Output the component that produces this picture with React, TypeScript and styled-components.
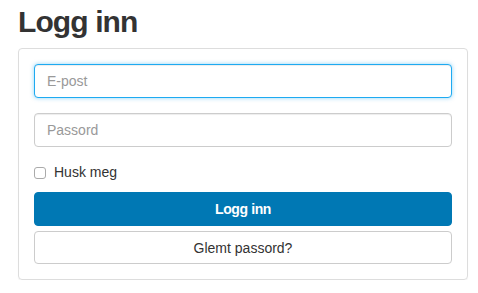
import React from "react";
import styled, { createGlobalStyle } from "styled-components";

const Global = createGlobalStyle`
  html, body { margin: 0; padding: 0; background: #fff; }
  body { font-family: "Liberation Sans", Arial, sans-serif; color: #333; }
  * { box-sizing: border-box; }
`;

const Page = styled.div`
  padding: 3px 11px 0 18px;
  width: 478px;
`;

const Title = styled.h1`
  margin: 0 0 7px 0;
  font-size: 30px;
  line-height: 38px;
  font-weight: bold;
  letter-spacing: -0.9px;
  color: #333;
`;

const Card = styled.form`
  width: 450px;
  border: 1px solid #ddd;
  border-radius: 4px;
  padding: 15px;
  display: flex;
  flex-direction: column;
  box-shadow: 0 1px 1px rgba(0, 0, 0, 0.05);
`;

const Input = styled.input<{ $focused?: boolean }>`
  display: block;
  width: 100%;
  height: 34px;
  padding: 6px 12px;
  font-family: "Liberation Sans", Arial, sans-serif;
  font-size: 14px;
  color: #555;
  border: 1px solid ${(p) => (p.$focused ? "#1eaaf1" : "#ccc")};
  border-radius: 4px;
  outline: none;
  margin-bottom: 15px;
  box-shadow: ${(p) =>
    p.$focused
      ? "inset 0 1px 1px rgba(0,0,0,.075), 0 0 4px rgba(30,170,241,.5)"
      : "inset 0 1px 1px rgba(0,0,0,.075)"};
  &::placeholder { color: #999; }
`;

const CheckRow = styled.label`
  display: flex;
  align-items: center;
  height: 20px;
  margin: 0 0 10px 0;
  font-size: 14px;
  color: #333;
`;

const Box = styled.span`
  width: 12px;
  height: 12px;
  border: 1px solid #aaa;
  border-radius: 3px;
  margin: 1px 8px 0 0;
  background: #fff;
`;

const Button = styled.button<{ $primary?: boolean }>`
  display: block;
  width: 100%;
  height: ${(p) => (p.$primary ? "34px" : "33px")};
  font-family: "Liberation Sans", Arial, sans-serif;
  font-size: 14px;
  letter-spacing: ${(p) => (p.$primary ? "-0.4px" : "0")};
  font-weight: ${(p) => (p.$primary ? "bold" : "normal")};
  color: ${(p) => (p.$primary ? "#fff" : "#333")};
  background: ${(p) => (p.$primary ? "#0078b4" : "#fff")};
  border: 1px solid ${(p) => (p.$primary ? "#0078b4" : "#ccc")};
  border-radius: 4px;
  margin-bottom: ${(p) => (p.$primary ? "5px" : "0")};
  padding: 0;
`;

export default function App() {
  return (
    <>
      <Global />
      <Page>
        <Title>Logg inn</Title>
        <Card onSubmit={(e) => e.preventDefault()}>
          <Input $focused placeholder="E-post" />
          <Input type="password" placeholder="Passord" />
          <CheckRow>
            <Box />
            Husk meg
          </CheckRow>
          <Button $primary type="submit">Logg inn</Button>
          <Button type="button">Glemt passord?</Button>
        </Card>
      </Page>
    </>
  );
}
